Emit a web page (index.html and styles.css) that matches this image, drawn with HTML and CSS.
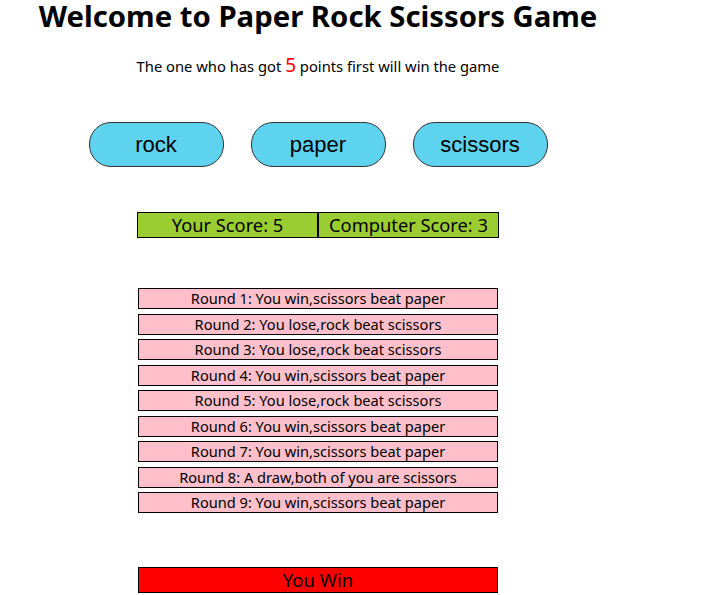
FILE: index.html
```html
<!DOCTYPE html>
<html>
<head>
<meta charset="utf-8">
<link rel="stylesheet" href="styles.css">
</head>
<body>
<div class="game">
  <h1 class="title">Welcome to Paper Rock Scissors Game</h1>
  <p class="rule">The one who has got <span class="target">5</span> points first will win the game</p>
  <div class="choices">
    <button class="choice">rock</button>
    <button class="choice">paper</button>
    <button class="choice">scissors</button>
  </div>
  <div class="score">
    <div class="score-cell">Your Score: 5</div>
    <div class="score-cell">Computer Score: 3</div>
  </div>
  <div class="rounds">
    <div class="round">Round 1: You win,scissors beat paper</div>
    <div class="round">Round 2: You lose,rock beat scissors</div>
    <div class="round">Round 3: You lose,rock beat scissors</div>
    <div class="round">Round 4: You win,scissors beat paper</div>
    <div class="round">Round 5: You lose,rock beat scissors</div>
    <div class="round">Round 6: You win,scissors beat paper</div>
    <div class="round">Round 7: You win,scissors beat paper</div>
    <div class="round">Round 8: A draw,both of you are scissors</div>
    <div class="round">Round 9: You win,scissors beat paper</div>
  </div>
  <div class="result">You Win</div>
</div>
</body>
</html>
```
FILE: styles.css
```css
html, body {
  margin: 0;
  padding: 0;
  background: #fff;
}
body {
  padding: 0 8px;
  font-family: "Noto Sans", "Open Sans", sans-serif;
  color: #000;
}
.game {
  width: 620px;
  display: flex;
  flex-direction: column;
  align-items: center;
}
.title {
  margin: 0;
  font-size: 29.3px;
  line-height: 33px;
  font-weight: 700;
}
.rule {
  margin: 22px 0 0;
  font-size: 14.75px;
  line-height: 20px;
}
.target {
  color: #ff0000;
  font-size: 19px;
}
.choices {
  display: flex;
  gap: 27px;
  margin-top: 46px;
}
.choice {
  width: 135px;
  height: 45px;
  border: 1px solid #333;
  border-radius: 22px;
  background: #5dd3f0;
  font-family: "Liberation Sans", Arial, sans-serif;
  font-size: 22px;
  color: #000;
  padding: 0;
}
.score {
  display: flex;
  width: 360px;
  margin-top: 45px;
  border: 1px solid #000;
  background: #9acd32;
}
.score-cell {
  flex: 1;
  text-align: center;
  font-size: 18.3px;
  line-height: 24px;
}
.score-cell + .score-cell {
  border-left: 2px solid #000;
}
.rounds {
  display: flex;
  flex-direction: column;
  gap: 4.5px;
  margin-top: 50px;
}
.round {
  width: 358px;
  border: 1px solid #000;
  background: #ffc0cb;
  text-align: center;
  font-size: 14.6px;
  line-height: 19px;
}
.result {
  width: 358px;
  margin-top: 54px;
  border: 1px solid #000;
  background: #ff0000;
  text-align: center;
  font-size: 18.5px;
  line-height: 24px;
}
```
